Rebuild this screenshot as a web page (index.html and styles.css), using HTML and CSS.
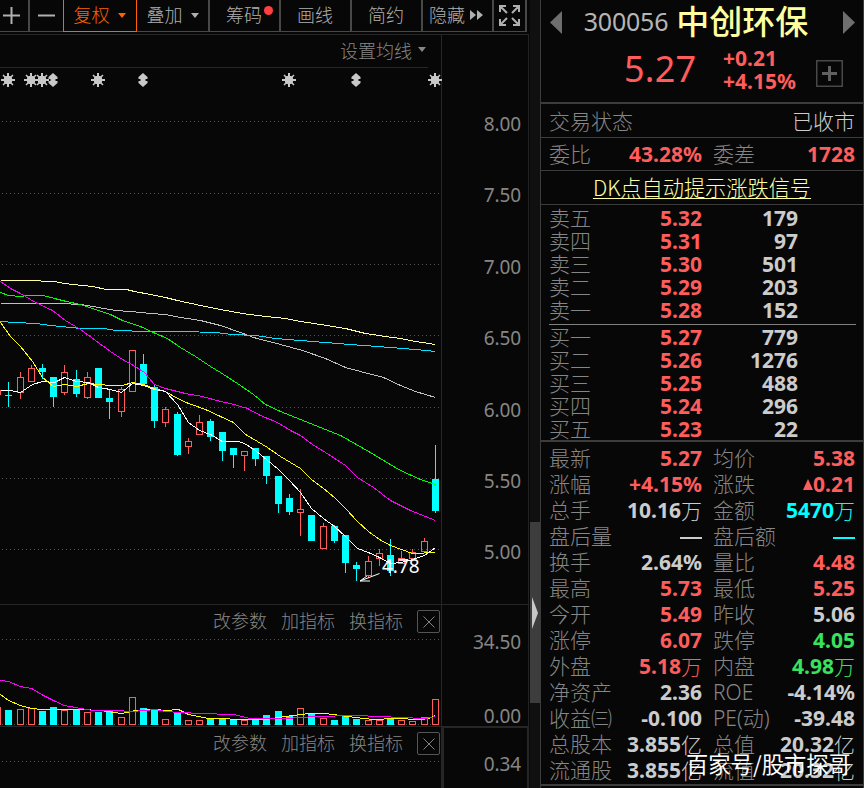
FILE: index.html
```html
<!DOCTYPE html>
<html lang="zh-CN">
<head>
<meta charset="utf-8">
<title>中创环保 300056</title>
<link rel="stylesheet" href="styles.css">
</head>
<body>
<div class="app">
  <main class="left">
    <nav class="toolbar">
      <button class="tool w-plus"><svg width="17" height="17" viewBox="0 0 17 17"><path d="M0 8.5H17M8.5 0V17" stroke="#b0b0b0" stroke-width="2"/></svg></button>
      <button class="tool w-minus"><svg width="17" height="17" viewBox="0 0 17 17"><path d="M0 8.5H17" stroke="#b0b0b0" stroke-width="2"/></svg></button>
      <button class="tool w-fq active"><span>复权</span><i class="caret"></i></button>
      <button class="tool w-dj"><span>叠加</span><i class="caret"></i></button>
      <button class="tool w-std dotted"><span>筹码</span><i class="dot"></i></button>
      <button class="tool w-std"><span>画线</span></button>
      <button class="tool w-std"><span>简约</span></button>
      <button class="tool w-hide"><span>隐藏</span><svg width="14" height="10" viewBox="0 0 14 10"><path d="M0 0L6 5L0 10ZM7 0L13 5L7 10Z" fill="#b0b0b0"/></svg></button>
      <button class="tool w-full"><svg width="21" height="21" viewBox="0 0 21 21" fill="none" stroke="#b0b0b0" stroke-width="2"><path d="M1 7V1H7M1 1L8 8M14 1H20V7M20 1L13 8M1 14V20H7M1 20L8 13M14 20H20V14M20 20L13 13"/></svg></button>
    </nav>
    <div class="charts">
      <section class="plot main">
        <svg class="canvas" id="kline" width="442" height="569" viewBox="0 35 442 569"></svg>
        <div class="ma">设置均线<i class="caret small"></i></div>
      </section>
      <div class="axis prices"><span>8.00</span><span>7.50</span><span>7.00</span><span>6.50</span><span>6.00</span><span>5.50</span><span>5.00</span></div>
      <section class="plot vol">
        <svg class="canvas" id="volume" width="442" height="121" viewBox="0 605 442 121"></svg>
        <div class="links"><span>改参数</span><span>加指标</span><span>换指标</span><b class="close"><svg width="12" height="12" viewBox="0 0 12 12"><path d="M.5 .5L11.5 11.5M11.5 .5L.5 11.5" stroke="#858585"/></svg></b></div>
      </section>
      <div class="axis volumes"><span>34.50</span><span>0.00</span></div>
      <section class="plot ind">
        <svg class="canvas" id="indicator" width="442" height="61" viewBox="0 727 442 61"></svg>
        <div class="links"><span>改参数</span><span>加指标</span><span>换指标</span><b class="close"><svg width="12" height="12" viewBox="0 0 12 12"><path d="M.5 .5L11.5 11.5M11.5 .5L.5 11.5" stroke="#858585"/></svg></b></div>
      </section>
      <div class="axis indicator"><span>0.34</span></div>
    </div>
  </main>
  <div class="splitter"><div class="thumb"><svg width="6" height="32" viewBox="0 0 6 32"><path d="M0 0L6 16L0 32Z" fill="#c8c8c8"/></svg></div></div>
  <aside class="quote">
    <header class="head">
      <svg class="nav" width="12" height="23" viewBox="0 0 12 23"><path d="M12 0V23L0 11.5Z" fill="#6e6e6e"/></svg>
      <div class="title"><span class="code">300056</span><span class="name">中创环保</span></div>
      <svg class="nav" width="12" height="23" viewBox="0 0 12 23"><path d="M0 0V23L12 11.5Z" fill="#6e6e6e"/></svg>
      <div class="now"><span class="price">5.27</span><span class="delta"><span>+0.21</span><span>+4.15%</span></span>
      <svg class="add" width="27" height="27" viewBox="0 0 27 27"><rect x=".75" y=".75" width="25.5" height="25.5" fill="none" stroke="#484848" stroke-width="1.5"/><path d="M6 13.5H21M13.5 6V21" stroke="#606060" stroke-width="3"/></svg></div>
    </header>
    <div class="row status"><span>交易状态</span><em>已收市</em></div>
    <div class="row four commit"><span>委比</span><b class="r">43.28%</b><span>委差</span><b class="r">1728</b></div>
    <div class="row dk"><a>DK点自动提示涨跌信号</a></div>
    <div class="book">
      <div class="lv"><span>卖五</span><b class="r">5.32</b><b>179</b></div>
      <div class="lv"><span>卖四</span><b class="r">5.31</b><b>97</b></div>
      <div class="lv"><span>卖三</span><b class="r">5.30</b><b>501</b></div>
      <div class="lv"><span>卖二</span><b class="r">5.29</b><b>203</b></div>
      <div class="lv"><span>卖一</span><b class="r">5.28</b><b>152</b></div>
      <hr>
      <div class="lv"><span>买一</span><b class="r">5.27</b><b>779</b></div>
      <div class="lv"><span>买二</span><b class="r">5.26</b><b>1276</b></div>
      <div class="lv"><span>买三</span><b class="r">5.25</b><b>488</b></div>
      <div class="lv"><span>买四</span><b class="r">5.24</b><b>296</b></div>
      <div class="lv"><span>买五</span><b class="r">5.23</b><b>22</b></div>
    </div>
    <div class="stats">
      <div class="four"><span>最新</span><b class="r">5.27</b><span>均价</span><b class="r">5.38</b></div>
      <div class="four"><span>涨幅</span><b class="r">+4.15%</b><span>涨跌</span><b class="r"><i class="up"></i>0.21</b></div>
      <div class="four"><span>总手</span><b>10.16<u>万</u></b><span>金额</span><b class="c">5470<u>万</u></b></div>
      <div class="four"><span>盘后量</span><b><i class="dash"></i></b><span>盘后额</span><b class="c"><i class="dash"></i></b></div>
      <div class="four"><span>换手</span><b>2.64%</b><span>量比</span><b class="r">4.48</b></div>
      <div class="four"><span>最高</span><b class="r">5.73</b><span>最低</span><b class="r">5.25</b></div>
      <div class="four"><span>今开</span><b class="r">5.49</b><span>昨收</span><b>5.06</b></div>
      <div class="four"><span>涨停</span><b class="r">6.07</b><span>跌停</span><b class="g">4.05</b></div>
      <div class="four"><span>外盘</span><b class="r">5.18<u>万</u></b><span>内盘</span><b class="g">4.98<u>万</u></b></div>
      <div class="four"><span>净资产</span><b>2.36</b><span class="lat">ROE</span><b>-4.14%</b></div>
      <div class="four"><span>收益㈢</span><b>-0.100</b><span class="lat">PE(动)</span><b>-39.48</b></div>
      <div class="four"><span>总股本</span><b>3.855<u>亿</u></b><span>总值</span><b>20.32<u>亿</u></b></div>
      <div class="four"><span>流通股</span><b>3.855<u>亿</u></b><span>流值</span><b>20.32<u>亿</u></b></div>
    </div>
  </aside>
  <div class="watermark">百家号/股市探哥</div>
</div>
<script src="chart.js"></script>
</body>
</html>
```
FILE: styles.css
```css
* { box-sizing: border-box; }
body { margin: 0; background: #070707; color: #868686; font-family: "Noto Sans", "Noto Sans CJK SC", sans-serif; overflow: hidden; }
.app { position: relative; display: flex; width: 864px; height: 788px; }
.left { width: 529px; display: flex; flex-direction: column; }

.toolbar { display: flex; height: 32px; width: 527px; border-bottom: 1px solid #484848; margin-bottom: 2px; }
.tool { display: flex; align-items: center; justify-content: center; gap: 8px; height: 32px; padding: 0 1px 1px 0; border: 0; border-right: 2px solid #484848; border-bottom: 1px solid #484848; background: none; color: #b0b0b0; font: 300 18px/28px "Noto Sans CJK SC", sans-serif; }
.tool span { padding-bottom: 2px; }
.w-plus { width: 30px; padding-right: 5px; }
.w-minus { width: 33px; border-right: 0; }
.w-fq { width: 74px; }
.w-dj { width: 73px; padding-left: 1px; }
.w-std { width: 71px; }
.w-hide { width: 71px; gap: 5px; padding-right: 2px; }
.w-full { width: 33px; padding: 0; }
.active { color: #ff6100; border: 1px solid #ff6100; border-top: 0; }
.dotted { position: relative; }
.dot { position: absolute; right: 6px; top: 6px; width: 9px; height: 9px; border-radius: 50%; background: #ff4040; }
.caret { border: 4px solid transparent; border-top: 5px solid currentColor; border-bottom: 0; }

.charts { display: grid; grid-template: 570px 122px 62px / 442px 87px; width: 529px; border-right: 1px solid #222; }
.plot { display: grid; border-top: 1px solid #262626; border-right: 1px solid #262626; }
.canvas { grid-area: 1 / 1; display: block; }
.ma { grid-area: 1 / 1; align-self: start; width: 428px; height: 33px; border-bottom: 1px solid #262626; padding: 0 2px 3px 0; display: flex; justify-content: flex-end; align-items: center; gap: 6px; font: 300 18px/28px "Noto Sans CJK SC", sans-serif; }
.links { grid-area: 1 / 1; align-self: start; display: flex; justify-content: flex-end; align-items: flex-start; gap: 14px; padding: 4px 2px 0 0; font: 300 18px/23px "Noto Sans CJK SC", sans-serif; }
.close { width: 23px; height: 23px; border: 1px solid #555; border-radius: 2px; display: flex; align-items: center; justify-content: center; margin: 1px 0 0; }
.axis { display: flex; flex-direction: column; border-top: 1px solid #262626; padding-right: 8px; font-size: 19px; text-align: right; letter-spacing: -.1px; }
.prices { padding-top: 53px; }
.prices span { height: 71.4px; line-height: 72.6px; }
.volumes { padding-top: 25px; }
.volumes span { flex: none; height: 74px; line-height: 24px; }
.volumes span:last-child { height: 22px; }
.axis.indicator { border: 2px solid #262626; border-bottom: 0; padding: 24px 6px 0 0; line-height: 24px; }

.splitter { width: 11px; background: #101010; border-left: 1px solid #080808; }
.thumb { margin-top: 522px; height: 181px; background: #3d3d3d; display: flex; align-items: center; padding-left: 2px; }

.quote { width: 324px; border: 1px solid #3c3c3c; border-width: 0 1px; font-size: 21px; }
.quote span, .quote em { font-family: "Noto Sans CJK SC", sans-serif; font-weight: 300; font-style: normal; }
.quote b { color: #ccc; text-align: right; font-weight: 700; }
.quote u { font-family: "Noto Sans CJK SC", sans-serif; font-weight: 300; text-decoration: none; }
.quote .r { color: #ff5c5c; }
.quote .g { color: #38e25d; }
.quote .c { color: #00ffff; }
.quote .lat { font-family: "Noto Sans", "Noto Sans CJK SC", sans-serif; font-size: 21px; }
.head { height: 104px; border-bottom: 2px solid #3c3c3c; display: grid; grid-template: 44px 58px / 12px 1fr 12px; padding: 0 8px 0 9px; align-items: center; }
.title { display: flex; justify-content: center; align-items: center; gap: 8px; padding: 0 13px 4px 0; height: 44px; }
.quote .code { font: 400 25px/40px "Noto Sans"; color: #b5b5b5; letter-spacing: -.2px; padding-top: 1px; }
.quote .name { font: 500 33px/40px "Noto Sans CJK SC"; color: #ffffa0; white-space: nowrap; }
.now { grid-column: 1 / 4; display: flex; align-items: center; padding-left: 74px; height: 58px; }
.quote .price { font: 400 36px/50px "Noto Sans"; color: #ff5c5c; width: 99px; padding-bottom: 9px; letter-spacing: .2px; }
.delta { display: flex; flex-direction: column; width: 93px; padding-bottom: 6px; }
.quote .delta span { font: 700 21px/23px "Noto Sans"; color: #ff5c5c; }
.row { padding: 0 8px 0 8px; border-bottom: 1px solid #3c3c3c; line-height: 32px; height: 34px; }
.status { display: flex; justify-content: space-between; }
.status em { color: #ccc; }
.commit { height: 33px; line-height: 31px; }
.dk { text-align: center; color: #ffffa0; }
.dk a { font: 300 21.2px/32px "Noto Sans CJK SC", sans-serif; text-decoration: underline; text-underline-offset: 2px; text-decoration-thickness: 1px; }
.four { display: grid; grid-template-columns: 74px 79px 75px 1fr; }
.four span:nth-child(3) { padding-left: 11px; }
.four > * { white-space: nowrap; }
.four b { display: flex; justify-content: flex-end; align-items: center; }
.book { padding: 2px 7px 0 8px; height: 237px; border-bottom: 2px solid #3c3c3c; }
.lv { display: grid; grid-template-columns: 70px 83px 96px; line-height: 23px; height: 23px; }
.lv span { line-height: 21px; }
.book hr { border: 0; height: 1px; background: #808080; margin: 2px 0 1px; }
.stats { padding: 3px 8px 0 8px; height: 344px; border-bottom: 2px solid #3c3c3c; }
.stats .four { line-height: 26px; height: 26px; }
.stats span:not(.lat) { line-height: 24px; }
.up { border: 5.5px solid transparent; border-bottom: 11px solid #ff5c5c; border-top: 0; }
.dash { width: 22px; height: 2px; background: currentColor; margin-top: 4px; }
.watermark { position: absolute; left: 686px; top: 747px; color: #fff; font: 400 22.3px/32px "Noto Sans CJK SC", sans-serif; white-space: nowrap; }
```
FILE: chart.js
```js
const RED = '#ff5c5c', CYAN = '#00ffff';

// x, high, body top, body bottom, low, rising, volume bar top
const bars = [
  [-3,390,390,395,395,1,707],[8,382,395,396,407,0,710],[20,372,377,393,399,1,709],[31,365,368,382,382,1,708],
  [42,364,368,372,379,0,711],[53,377,377,397,407,0,707],[64,365,372,393,395,1,710],[76,370,379,394,397,0,710],
  [87,372,377,398,399,1,712],[98,368,368,398,398,0,712],[109,390,398,402,419,0,711],[121,387,389,412,417,1,717],
  [132,350,350,392,392,1,697],[143,354,364,384,384,0,708],[154,384,387,421,428,0,710],[165,407,409,423,427,1,719],
  [177,412,414,455,456,0,713],[188,438,441,447,454,1,720],[199,415,422,435,435,1,720],[210,419,421,437,441,0,719],
  [222,432,432,451,461,0,718],[233,448,448,455,468,0,719],[244,451,451,456,471,1,720],[255,448,448,459,466,0,719],
  [266,456,456,476,484,0,715],[278,476,476,504,513,0,711],[289,494,498,512,515,0,716],[300,489,509,513,536,1,708],
  [311,515,515,541,541,0,714],[323,523,526,549,549,1,718],[334,525,526,541,543,0,720],[345,535,535,563,573,0,715],
  [356,562,565,569,581,0,719],[368,556,561,576,578,1,720],[379,549,553,559,566,1,720],[390,539,555,571,576,0,719],
  [401,551,558,564,564,1,720],[412,549,552,559,559,1,721],[424,538,541,552,552,1,717],[435,445,479,511,513,0,699,1]
];

const averages = [
  ['#ffffa0', '0,280 26,280 54,281 64,283 82,285 92,286 106,289 126,289 134,291 150,294 165,297 177,300 200,305 220,309 242,313 265,316 285,318 300,321 320,324 345,328 365,333 385,336 400,338 415,341 435,344'],
  ['#c0c0c0', '0,303 60,303 80,304 98,307 115,310 130,311 150,313 165,314 180,317 200,320 220,325 240,332 253,337 280,344 302,350 325,358 345,367 360,371 383,377 400,385 415,391 435,397'],
  ['#00e5ff', '0,321 15,322 36,323 50,325 70,327 80,328 103,328 115,330 148,331 182,331 215,332 232,334 255,335 275,338 300,340 325,342 350,344 390,347 415,349 435,351'],
  ['#00ff00', '0,292 8,295 20,296 28,295 43,295 54,298 66,301 80,304 98,310 110,314 122,320 140,326 155,333 167,338 180,347 195,356 210,366 220,372 240,385 253,394 265,404 280,411 300,419 320,427 340,435 363,448 400,470 420,479 435,484'],
  ['#ff00ff', '0,281 10,288 20,293 35,302 52,310 65,320 80,329 95,340 110,351 122,359 133,365 144,372 154,384 165,388 185,393 202,396 220,401 230,403 247,408 260,415 277,422 290,430 300,435 312,444 325,452 345,465 357,477 373,487 390,500 410,510 425,516 435,520'],
  ['#ffff00', '0,322 10,336 20,346 32,361 42,377 53,386 64,384 76,386 88,383 110,385 122,385 132,382 143,384 154,388 165,391 177,398 188,403 205,409 220,416 233,422 245,434 257,441 267,447 280,456 300,468 311,479 323,488 334,497 345,508 357,521 368,531 379,539 390,545 401,549 412,553 435,552'],
  ['#ffffff', '0,390 10,390 20,392 32,384 42,381 54,382 64,377 76,381 88,382 98,387 110,389 121,392 132,383 143,385 154,389 165,391 177,404 188,422 199,430 210,434 222,441 238,441 244,443 255,450 266,459 278,469 289,480 300,492 311,508 323,518 334,526 345,536 357,548 368,552 379,557 390,563 401,562 412,559 424,555 435,547']
];

const volumeAverages = [
  ['#ffff00', '0,694 8,700 20,705 31,708 42,709 80,709 100,710 121,713 135,710 155,709 165,710 178,709 188,714 208,718 225,718 233,719 265,719 285,716 308,713 325,713 340,715 355,717 373,719 395,718 420,719 428,718 435,715'],
  ['#ff00ff', '0,680 8,681 20,686 31,688 43,695 55,701 64,705 75,707 92,710 115,710 132,711 155,709 165,711 180,712 200,713 233,714 250,718 285,718 315,716 355,715 380,716 400,717 425,718 435,716']
];

const grid = y => `<path d="M2 ${y + .5}H441" stroke="#555" stroke-dasharray="1 3"/>`;
const line = ([color, points]) =>
  `<polyline points="${points}" transform="translate(.5 .5)" fill="none" stroke="${color}"/>`;

function body(x, top, bottom, rising) {
  return rising
    ? `<rect x="${x - 2.5}" y="${top + .5}" width="6" height="${bottom - top - 1}" fill="none" stroke="${RED}"/>`
    : `<rect x="${x - 3}" y="${top}" width="7" height="${bottom - top}" fill="${CYAN}"/>`;
}

function candle([x, high, top, bottom, low, rising]) {
  const color = rising ? RED : CYAN;
  return `<path d="M${x + .5} ${high}V${top}M${x + .5} ${bottom}V${low}" stroke="${color}"/>` + body(x, top, bottom, rising);
}

const sun = x => `<g transform="translate(${x} 80)" fill="#c8c8c8" stroke="#c8c8c8"><circle r="4"/><path stroke-width="2" d="M-7 0H7M0 -7V7"/><path stroke-width="1.5" d="M-5 -5L5 5M5 -5L-5 5"/></g>`;
const arrows = x => `<path transform="translate(${x} 80)" fill="#c8c8c8" d="M0 -7L4.5 -3V-1H2.5V1H4.5V3L0 7L-4.5 3V1H-2.5V-1H-4.5V-3Z"/>`;

document.getElementById('kline').innerHTML =
  '<g shape-rendering="crispEdges">' +
  [121, 193, 264, 335, 407, 478, 549].map(grid).join('') +
  bars.map(candle).join('') + averages.map(line).join('') + '</g>' +
  [8, 31, 42, 98, 289, 435].map(sun).join('') + [53, 143, 356].map(arrows).join('') +
  '<path d="M379.5 573.5L360 581H370M360 581L367 576" fill="none" stroke="#fff"/>' +
  '<text class="low" x="382" y="573" fill="#fff" font-size="19">4.78</text>';

document.getElementById('volume').innerHTML =
  '<g shape-rendering="crispEdges">' + [639, 724].map(grid).join('') +
  bars.map(b => body(b[0], b[6], 725, b[7] || b[5])).join('') + volumeAverages.map(line).join('') + '</g>';

document.getElementById('indicator').innerHTML = '<g shape-rendering="crispEdges">' + grid(761) + '</g>';
```
